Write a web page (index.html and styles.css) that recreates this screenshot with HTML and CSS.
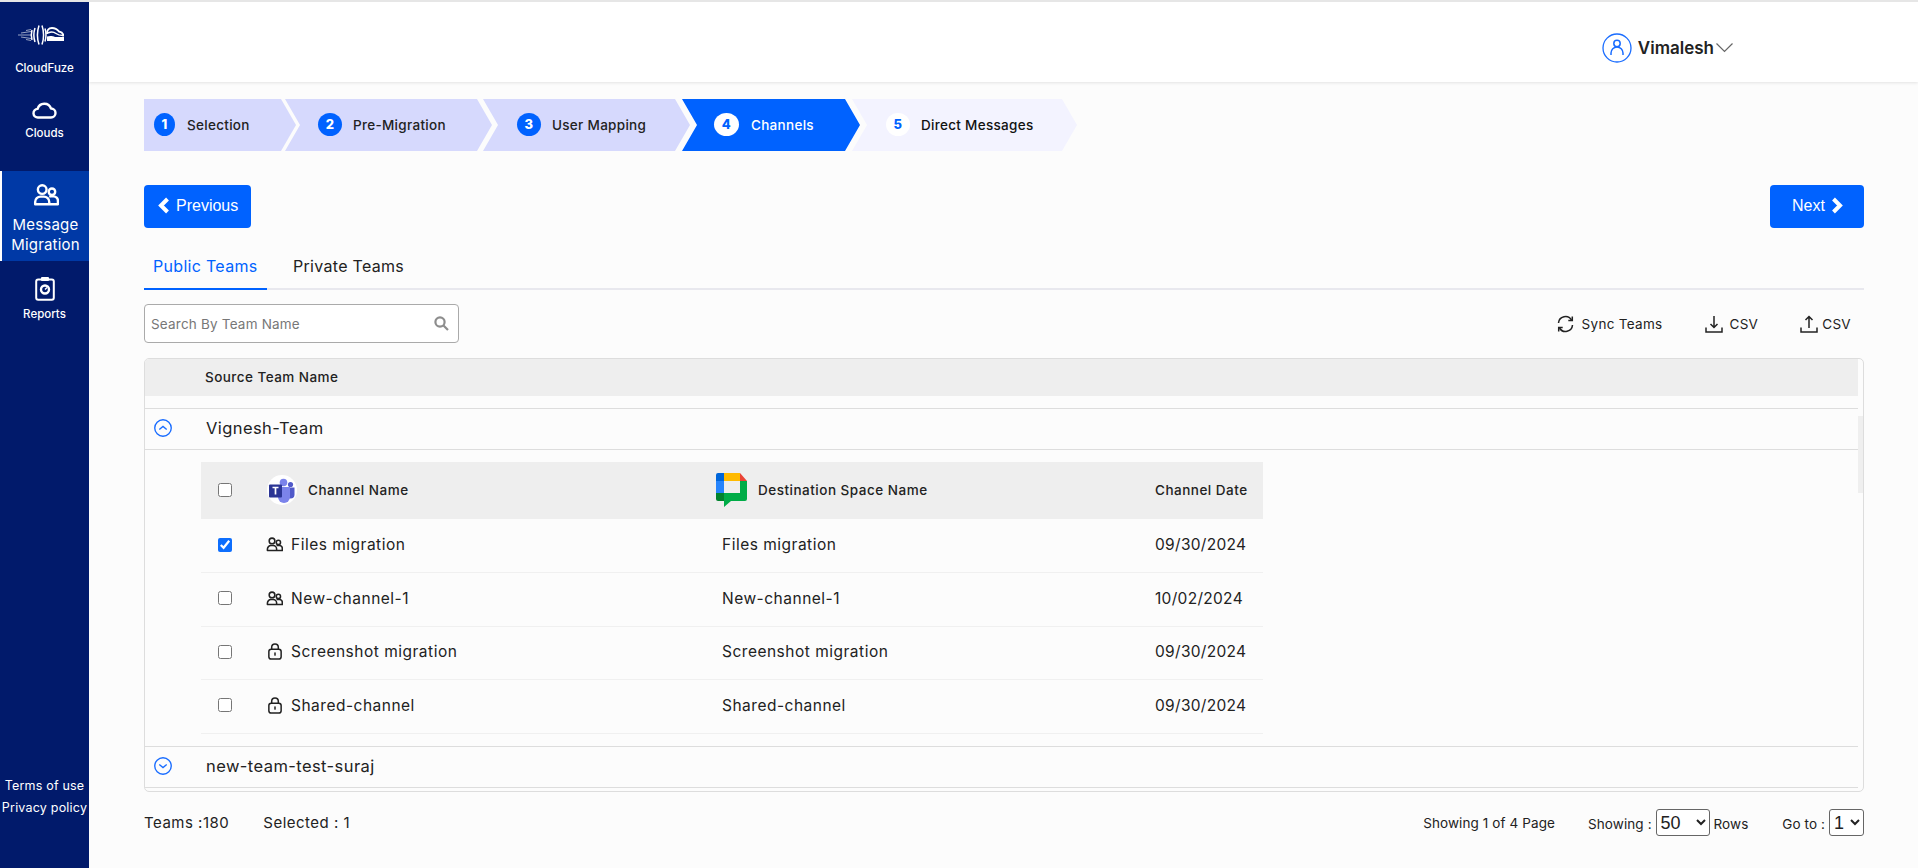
FILE: index.html
```html
<!DOCTYPE html>
<html lang="en">
<head>
	<meta charset="UTF-8">
	<title>CloudFuze | Channels</title>
	<link rel="stylesheet" href="styles.css">
</head>
<body>
	<svg class="sprite" xmlns="http://www.w3.org/2000/svg">
		<symbol id="people" viewBox="0 0 24 24">
			<circle cx="8.500" cy="7" r="4" fill="none" stroke="currentColor" stroke-width="2.200"/>
			<circle cx="17.500" cy="9" r="3" fill="none" stroke="currentColor" stroke-width="2.200"/>
			<path d="M2 20.500v-2a5 5 0 0 1 5-5h3a5 5 0 0 1 5 5v2zM15 13.600a4 4 0 0 1 1.500-.3h2.500a4 4 0 0 1 4 4v3.200h-8" fill="none" stroke="currentColor" stroke-width="2.200" stroke-linejoin="round"/>
		</symbol>
		<symbol id="lock" viewBox="0 0 16 18">
			<rect x="1.500" y="6.500" width="13" height="10.500" rx="2.500" fill="none" stroke="currentColor" stroke-width="1.600"/>
			<path d="M4.500 6.500V4.500a3.500 3.500 0 0 1 7 0v2" fill="none" stroke="currentColor" stroke-width="1.600"/>
			<rect x="7.200" y="10" width="1.600" height="3.400" fill="currentColor"/>
		</symbol>
	</svg>

	<aside class="sidebar">
		<div class="side-item logo-item">
			<svg class="logo" width="46" height="20" viewBox="0 0 46 20" fill="none" stroke="#fff">
				<path d="M0 10h13M3 8l10-1.500M3 12l10 1.500M8 5.500l5-1M8 14.500l5 1" stroke-width=".8" opacity=".75"/>
				<path d="M14 5c-1 3.500-1 6.500 0 10M17 3c-1.500 4.500-1.500 9.500 0 14M21 0.500c-2 6-2 13 0 19M24 0.500c2 6 2 13 0 19M27 3.500c1.200 4 1.200 9 0 13" stroke-width="1.500"/>
				<path d="M29 9c0-4 1.500-6 5-6 3 0 5 1 7 3.500 3 .5 4.500 2.500 4.500 5" stroke-width="1.900"/>
				<path d="M30 8c3-1.500 6-1 8 .5 2 1.500 4 2 7 2" stroke-width="1.500"/>
				<path d="M29 11.500c3-1 6-.5 8 .5h9v4H29z" fill="#fff" stroke="none"/>
			</svg>
			<span>CloudFuze</span>
		</div>
		<div class="side-item clouds-item">
			<svg width="25" height="18" viewBox="0 0 25 18" fill="none" stroke="#fff" stroke-width="2.400">
				<path d="M6 16.500a4.300 4.300 0 0 1-.4-8.600 7 7 0 0 1 13.400-.4 4.500 4.500 0 0 1 0 9z" stroke-linejoin="round"/>
			</svg>
			<span>Clouds</span>
		</div>
		<div class="side-item active">
			<svg class="side-people" width="26" height="26"><use href="#people"/></svg>
			<span>Message<br>Migration</span>
		</div>
		<div class="side-item reports-item">
			<svg width="20" height="25" viewBox="0 0 20 25" fill="none" stroke="#fff">
				<rect x="1.200" y="3.500" width="17.600" height="20.300" rx="2" stroke-width="2"/>
				<rect x="6" y="1" width="8" height="4" rx="1" fill="#fff" stroke="none"/>
				<circle cx="10" cy="13.500" r="4" stroke-width="2.400"/>
				<path d="M10 13.500l2-2" stroke-width="1.500"/>
			</svg>
			<span>Reports</span>
		</div>
		<div class="side-links">
			<span>Terms of use</span>
			<span>Privacy policy</span>
		</div>
	</aside>

	<div class="main">
		<header class="topbar">
			<div class="user">
				<svg width="30" height="30" viewBox="0 0 30 30" fill="none" stroke="#1a6dff" stroke-width="1.300">
					<circle cx="15" cy="15" r="14"/>
					<circle cx="15" cy="10.500" r="3.200" stroke-width="1.500"/>
					<path d="M9 22v-2a6 6 0 0 1 12 0v2" stroke-width="1.500"/>
				</svg>
				<span class="user-name">Vimalesh</span>
				<svg width="17" height="10" viewBox="0 0 17 10" fill="none" stroke="#666" stroke-width="1.200">
					<path d="M.500 .500l8 8 8-8"/>
				</svg>
			</div>
		</header>

		<div class="content">
			<ol class="steps">
				<li class="step step1 done"><b>1</b>Selection</li>
				<li class="step step2 done"><b>2</b>Pre-Migration</li>
				<li class="step step3 done"><b>3</b>User Mapping</li>
				<li class="step step4 current"><b>4</b>Channels</li>
				<li class="step step5 todo"><b>5</b>Direct Messages</li>
			</ol>

			<div class="nav-btns">
				<button class="btn btn-prev">
					<svg width="13" height="17" viewBox="0 0 13 17" fill="none" stroke="#fff" stroke-width="4"><path d="M10.500 2L4 8.500l6.500 6.500"/></svg>
					Previous
				</button>
				<button class="btn btn-next">
					Next
					<svg width="13" height="17" viewBox="0 0 13 17" fill="none" stroke="#fff" stroke-width="4"><path d="M2.500 2L9 8.500 2.500 15"/></svg>
				</button>
			</div>

			<div class="tabs">
				<span class="tab tab-on">Public Teams</span>
				<span class="tab">Private Teams</span>
			</div>

			<div class="toolbar">
				<div class="search">
					<span class="search-text">Search By Team Name</span>
					<svg width="15" height="15" viewBox="0 0 15 15" fill="none" stroke="#8d8d8d" stroke-width="2.200"><circle cx="6" cy="6" r="4.600"/><path d="M9.500 9.500L14 14"/></svg>
				</div>
				<div class="actions">
					<span class="action action-sync">
						<svg width="19" height="18" viewBox="0 0 18 18" fill="none" stroke="#222" stroke-width="1.500">
							<path d="M2 8a7 7 0 0 1 13-3M16 10a7 7 0 0 1-13 3"/>
							<path d="M15.800 1.500v4h-4M2.200 16.500v-4h4"/>
						</svg>
						Sync Teams
					</span>
					<span class="action action-down">
						<svg width="18" height="18" viewBox="0 0 18 18" fill="none" stroke="#222" stroke-width="1.500">
							<path d="M1 12.500v4.500h16v-4.500M9 1v11.500M5.500 9L9 12.500 12.500 9"/>
						</svg>
						CSV
					</span>
					<span class="action action-up">
						<svg width="18" height="18" viewBox="0 0 18 18" fill="none" stroke="#222" stroke-width="1.500">
							<path d="M1 12.500v4.500h16v-4.500M9 13V1.500M5.500 5L9 1.500 12.500 5"/>
						</svg>
						CSV
					</span>
				</div>
			</div>

			<div class="panel">
				<div class="scroll-thumb"></div>
				<div class="panel-inner">
					<div class="panel-head">Source Team Name</div>

					<div class="team-row team-first">
						<svg class="toggle" width="18" height="18" viewBox="0 0 17 17" fill="none" stroke="#1a6dff" stroke-width="1.300">
							<circle cx="8.500" cy="8.500" r="7.800"/><path d="M5 10l3.500-3 3.500 3"/>
						</svg>
						<span>Vignesh-Team</span>
					</div>

					<div class="team-body">
						<table class="channels">
							<colgroup>
								<col class="col-check"><col class="col-name"><col class="col-dest"><col class="col-date">
							</colgroup>
							<thead>
								<tr>
									<th class="cell-check"><input type="checkbox"></th>
									<th>
										<div class="th-logo">
											<svg class="teams-logo" width="30" height="30" viewBox="0 0 30 30">
												<circle cx="15" cy="15" r="15" fill="#fff"/>
												<circle cx="16.500" cy="7.500" r="3.800" fill="#7b83eb"/>
												<circle cx="23.500" cy="9.500" r="2.600" fill="#5059c9"/>
												<path d="M19.500 12.500h8v7a4 4 0 0 1-8 0z" fill="#5059c9"/>
												<path d="M11 12h12v10a6 6 0 0 1-12 0z" fill="#7b83eb"/>
												<rect x="2" y="9.500" width="13" height="13" rx="1" fill="#2b3595"/>
												<path d="M5.500 12.500h6M8.500 12.500v7" stroke="#fff" stroke-width="1.700"/>
											</svg>
											Channel Name
										</div>
									</th>
									<th>
										<div class="th-logo">
											<svg width="31" height="34" viewBox="0 0 31 34">
												<path d="M0 2a2 2 0 0 1 2-2h6v8H0z" fill="#0066da"/>
												<path d="M8 0h16v8H8z" fill="#ffba00"/>
												<path d="M24 0l7 8h-7z" fill="#ea4335"/>
												<path d="M0 8h8v12H0z" fill="#2684fc"/>
												<path d="M0 20h8v8H2a2 2 0 0 1-2-2z" fill="#00832d"/>
												<path d="M24 8h7v18a2 2 0 0 1-2 2H15l-7 6v-6H8v-8h16z" fill="#00ac47"/>
											</svg>
											Destination Space Name
										</div>
									</th>
									<th>Channel Date</th>
								</tr>
							</thead>
							<tbody>
								<tr>
									<td class="cell-check"><input type="checkbox" checked></td>
									<td><div class="ch-name"><svg class="ch-people" width="17" height="17"><use href="#people"/></svg>Files migration</div></td>
									<td class="cell-dest">Files migration</td>
									<td class="cell-date">09/30/2024</td>
								</tr>
								<tr>
									<td class="cell-check"><input type="checkbox"></td>
									<td><div class="ch-name"><svg class="ch-people" width="17" height="17"><use href="#people"/></svg>New-channel-1</div></td>
									<td class="cell-dest">New-channel-1</td>
									<td class="cell-date">10/02/2024</td>
								</tr>
								<tr>
									<td class="cell-check"><input type="checkbox"></td>
									<td><div class="ch-name"><svg width="16" height="17"><use href="#lock"/></svg>Screenshot migration</div></td>
									<td class="cell-dest">Screenshot migration</td>
									<td class="cell-date">09/30/2024</td>
								</tr>
								<tr>
									<td class="cell-check"><input type="checkbox"></td>
									<td><div class="ch-name"><svg width="16" height="17"><use href="#lock"/></svg>Shared-channel</div></td>
									<td class="cell-dest">Shared-channel</td>
									<td class="cell-date">09/30/2024</td>
								</tr>
							</tbody>
						</table>
					</div>

					<div class="team-row team-last">
						<svg class="toggle" width="18" height="18" viewBox="0 0 17 17" fill="none" stroke="#1a6dff" stroke-width="1.300">
							<circle cx="8.500" cy="8.500" r="7.800"/><path d="M5 7l3.500 3 3.500-3"/>
						</svg>
						<span>new-team-test-suraj</span>
					</div>
				</div>
			</div>

			<div class="foot">
				<div class="foot-left">
					<span>Teams :180</span>
					<span>Selected : 1</span>
				</div>
				<div class="foot-right">
					<span class="page-count">Showing 1 of 4 Page</span>
					<span class="rows-pick">Showing :
						<select class="sel sel-rows"><option>50</option><option>100</option></select>
						Rows</span>
					<span class="goto-pick">Go to :
						<select class="sel sel-page"><option>1</option><option>2</option></select></span>
				</div>
			</div>
		</div>
	</div>
</body>
</html>
```

FILE: styles.css
```css
* {
	box-sizing: border-box;
}

html, body {
	height: 100%;
	margin: 0;
}

body {
	display: flex;
	overflow: hidden;

	border-top: 2px solid #e6e6e6;
	background: #fcfcfc;

	font-family: 'Inter', 'Noto Sans', sans-serif;
	color: #222;
}

.sprite {
	display: none;
}

/* sidebar */

.sidebar {
	flex: none;
	display: flex;
	flex-direction: column;

	width: 89px;

	background: #011a6b;
	color: #fff;
}

.side-item {
	display: flex;
	flex-direction: column;
	align-items: center;

	font-size: 11.5px;
	font-weight: 500;
	text-align: center;
}

.logo-item {
	height: 94px;
	padding-top: 23px;
}

.logo-item span {
	margin-top: 16px;
}

.logo {
	margin-right: 8px;
}

.clouds-item {
	height: 75px;
	padding-top: 5px;
}

.clouds-item span {
	margin-top: 7px;
}

.active {
	height: 90px;
	padding-top: 11px;

	border-left: 2px solid #fff;
	background: #0039a6;

	font-size: 15px;
	font-weight: 400;
	line-height: 20px;
	letter-spacing: .2px;
}

.side-people {
	margin-bottom: 7px;
}

.reports-item {
	padding-top: 15px;
}

.reports-item span {
	margin-top: 6px;
}

.side-links {
	display: flex;
	flex-direction: column;
	gap: 6px;
	align-items: center;

	margin-top: auto;
	margin-bottom: 52px;

	font-size: 12.5px;
	line-height: 16px;
	letter-spacing: .2px;
	white-space: nowrap;
}

/* top */

.main {
	flex: 1;
	display: flex;
	flex-direction: column;
	min-width: 0;
}

.topbar {
	flex: none;
	display: flex;
	justify-content: flex-end;
	align-items: center;

	height: 80px;
	padding: 12px 185px 0 0;

	background: #fff;
	box-shadow: 0 1px 3px rgba(0,0,0,.1);
}

.user {
	display: flex;
	align-items: center;
}

.user-name {
	margin: 0 2px 0 6px;

	font-size: 17px;
	font-weight: 600;
}

.content {
	flex: 1;
	padding: 17px 54px 0 55px;
}

/* steps */

.steps {
	display: flex;

	height: 52px;
	margin: 0;
	padding: 0;

	list-style: none;
	font-size: 13.5px;
	font-weight: 500;
	letter-spacing: .3px;
}

.step {
	display: flex;
	align-items: center;

	margin-left: -8px;
	padding-bottom: 1px;

	clip-path: polygon(0 0, calc(100% - 15px) 0, 100% 50%, calc(100% - 15px) 100%, 0 100%, 15px 50%);
}

.step b {
	display: flex;
	align-items: center;
	justify-content: center;

	width: 24px;
	height: 23px;
	margin-right: 11px;
	margin-bottom: 1px;

	border-radius: 50%;

	font-size: 13px;
	font-weight: 800;
}

.step1 {
	width: 152px;
	margin-left: 0;
	padding-left: 10px;

	clip-path: polygon(0 0, calc(100% - 15px) 0, 100% 50%, calc(100% - 15px) 100%, 0 100%);
}

.step1 b {
	width: 21px;
	margin-right: 12px;
}

.step2 {
	width: 207px;
	margin-left: -11px;
	padding-left: 33px;
}

.step3 {
	width: 207px;
	margin-left: -9px;
	padding-left: 34px;
}

.step4 {
	width: 178px;
	padding-left: 32px;
}

.step4 b {
	width: 25px;
	margin-right: 12px;
}

.step5 {
	width: 225px;
	padding-left: 34px;
}

.done {
	background: #d6d9fd;
	color: #222;
}

.done b {
	background: #0062ff;
	color: #fff;
}

.current {
	background: #0062ff;
	color: #fff;
}

.current b {
	background: #fff;
	color: #0062ff;
}

.todo {
	background: #f3f3ff;
	color: #111;
}

.todo b {
	background: #fff;
	color: #0062ff;
}

/* buttons */

.nav-btns {
	display: flex;
	justify-content: space-between;

	margin-top: 34px;
}

.btn {
	display: flex;
	align-items: center;
	gap: 6px;

	height: 43px;
	padding: 0 0 2px 13px;

	border: 0;
	border-radius: 4px;
	background: #0062ff;
	color: #fff;

	font-family: 'Liberation Sans', sans-serif;
	font-size: 16px;
}

.btn-prev {
	width: 107px;
}

.btn-next {
	width: 94px;
	padding-left: 22px;
}

/* tabs */

.tabs {
	display: flex;

	height: 40px;
	margin-top: 22px;

	border-bottom: 2px solid #e8e8ee;
}

.tab {
	height: 40px;
	padding: 6px 9px 0;

	font-size: 16px;
	letter-spacing: .3px;
}

.tab + .tab {
	margin-left: 17px;
}

.tab-on {
	width: 123px;
	padding-right: 0;

	border-bottom: 2px solid #0062ff;
	color: #0062ff;
	white-space: nowrap;
}

/* toolbar */

.toolbar {
	display: flex;
	justify-content: space-between;
	align-items: center;

	margin-top: 14px;
}

.search {
	display: flex;
	justify-content: space-between;
	align-items: center;

	width: 315px;
	height: 39px;
	padding: 0 9px 0 6px;

	border: 1px solid #aaa;
	border-radius: 4px;
	background: #fff;

	font-size: 13.5px;
	letter-spacing: .2px;
	color: #777;
}

.actions {
	display: flex;
	margin-right: 13px;

	font-size: 13.5px;
	letter-spacing: .3px;
}

.action {
	display: flex;
	align-items: center;
	gap: 7px;
}

.action-down {
	margin-left: 42px;
}

.action-up {
	gap: 4px;
	margin-left: 42px;
}

/* panel */

.panel {
	position: relative;

	height: 434px;
	margin-top: 15px;
	padding-right: 5px;

	border: 1px solid #ddd;
	border-radius: 5px;
	overflow: hidden;
}

.scroll-thumb {
	position: absolute;
	top: 57px;
	right: 0;

	width: 5px;
	height: 77px;

	background: #efefef;
}

.panel-head {
	display: flex;
	align-items: center;

	height: 37px;
	padding: 0 0 2px 60px;

	background: #eee;

	font-size: 13.5px;
	font-weight: 500;
	letter-spacing: .45px;
}

.team-row {
	display: flex;
	align-items: center;

	height: 42px;
	padding: 0 0 2px 9px;

	border-top: 1px solid #ddd;
	border-bottom: 1px solid #ddd;

	font-size: 16.5px;
	letter-spacing: .42px;
}

.team-first {
	margin-top: 12px;
}

.toggle {
	margin-right: 34px;
}

.team-body {
	padding: 12px 0 12px 56px;
}

/* channel table */

.channels {
	width: 1062px;
	table-layout: fixed;
	border-collapse: collapse;

	font-size: 15.5px;
	letter-spacing: .5px;
}

.col-check {
	width: 66px;
}

.col-name {
	width: 449px;
}

.col-dest {
	width: 439px;
}

.col-date {
	width: 108px;
}

.channels input {
	display: block;

	width: 14px;
	height: 14px;
	margin: 0 0 0 17px;

	accent-color: #0d6efd;
}

.channels th {
	height: 57px;
	padding: 0 0 2px;

	background: #eee;

	font-size: 13.5px;
	font-weight: 500;
	letter-spacing: .5px;
	text-align: left;
}

.channels td {
	height: 53.5px;
	padding: 0 0 2px;

	border-bottom: 1px solid #f0f0f0;
}

.th-logo {
	display: flex;
	align-items: center;
	gap: 11px;
}

.channels .cell-dest {
	padding-left: 6px;
}

.channels .cell-date {
	letter-spacing: .3px;
}

.ch-name {
	display: flex;
	align-items: center;
	gap: 8px;
}

.ch-people {
	margin-left: -1px;
}

/* footer */

.foot {
	display: flex;
	justify-content: space-between;
	align-items: center;

	height: 27px;
	margin-top: 17px;
}

.foot-left {
	display: flex;
	gap: 34px;

	font-size: 15px;
	letter-spacing: .5px;
}

.foot-right {
	display: flex;
	align-items: center;

	font-size: 13.5px;
	letter-spacing: .1px;
}

.rows-pick {
	margin-left: 33px;
}

.goto-pick {
	margin-left: 34px;
}

.sel {
	height: 27px;
	padding: 0;

	border: 1px solid #666;
	border-radius: 3px;
	background: #fff;
	color: #222;

	font-family: 'Liberation Sans', sans-serif;
	font-size: 18px;
}

.sel-rows {
	width: 54px;
}

.sel-page {
	width: 35px;
}
```
